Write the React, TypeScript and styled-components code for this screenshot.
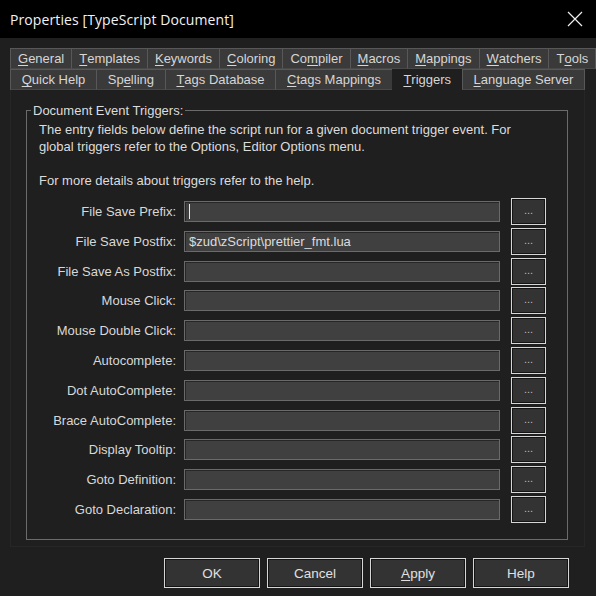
import { Fragment } from 'react';
import styled, { createGlobalStyle } from 'styled-components';

const GlobalStyle = createGlobalStyle`
  html, body {
    margin: 0;
    padding: 0;
    background: #1f1f1f;
  }
  * {
    box-sizing: border-box;
  }
`;

const Window = styled.div`
  width: 596px;
  height: 596px;
  background: #1f1f1f;
  color: #dcdcdc;
  font-family: 'Liberation Sans', Arial, sans-serif;
  font-size: 13px;
  display: flex;
  flex-direction: column;
  overflow: hidden;
`;

const TitleBar = styled.div`
  height: 38px;
  flex: none;
  background: #000;
  display: flex;
  align-items: center;
  justify-content: space-between;
  padding: 0 11px 0 10px;
`;

const Title = styled.div`
  color: #f2f2f2;
  font-family: 'Open Sans', 'Noto Sans', sans-serif;
  font-size: 14px;
  letter-spacing: 0.1px;
`;

const CloseButton = styled.div`
  width: 20px;
  height: 20px;
  display: flex;
  align-items: center;
  justify-content: center;
`;

const Body = styled.div`
  flex: 1;
  display: flex;
  flex-direction: column;
  padding: 10px 11px 0 10px;
`;

const TabStrip = styled.div`
  display: flex;
  flex-direction: column;
`;

const TabRow = styled.div`
  display: flex;
  height: 21px;
`;

const Tab = styled.div<{ $active?: boolean }>`
  flex: 1 1 auto;
  display: flex;
  align-items: center;
  justify-content: center;
  padding: 0 7px;
  margin-left: -1px;
  white-space: nowrap;
  color: #d6d6d6;
  background: ${({ $active }) => ($active ? '#1f1f1f' : '#3a3a3a')};
  border: 1px solid ${({ $active }) => ($active ? '#1f1f1f' : '#585858')};
  border-bottom-color: ${({ $active }) => ($active ? '#1f1f1f' : '#484848')};
  &:first-child {
    margin-left: 0;
  }
`;

const Key = styled.span`
  text-decoration: underline;
  text-underline-offset: 2px;
`;

const Page = styled.div`
  height: 457px;
  border: 1px solid #262626;
  border-top: none;
  padding: 13px 16px 0 15px;
`;

const Group = styled.fieldset`
  margin: 0;
  border: 1px solid #6b6b6b;
  padding: 3px 10px 16px 12px;
  min-width: 0;
`;

const Legend = styled.legend`
  margin-left: -8px;
  padding: 0 2px;
  line-height: 15px;
  color: #dcdcdc;
`;

const Intro = styled.p`
  margin: 0 0 9px;
  line-height: 17px;
  color: #dcdcdc;
  white-space: nowrap;
`;

const Fields = styled.div`
  display: grid;
  grid-template-columns: 137px 316px 35px;
  column-gap: 8px;
  row-gap: 2.8px;
  align-items: center;
`;

const Label = styled.label`
  justify-self: end;
  white-space: nowrap;
  color: #d8d8d8;
`;

const Field = styled.div`
  height: 21px;
  background: #404040;
  border: 1px solid #6a6a6a;
  box-shadow: inset 1px 1px 0 #262626;
  display: flex;
  align-items: center;
  padding: 0 4px;
  color: #dcdcdc;
  white-space: nowrap;
  overflow: hidden;
`;

const Caret = styled.span`
  width: 1px;
  height: 15px;
  background: #e8e8e8;
`;

const BrowseButton = styled.div`
  height: 27px;
  margin-left: 3px;
  width: 35px;
  background: #333;
  border: 1px solid #d6d6d6;
  box-shadow: inset 0 0 0 1px #141414;
  display: flex;
  align-items: center;
  justify-content: center;
  padding-bottom: 3px;
  color: #bdbdbd;
  font-size: 11px;
`;

const Footer = styled.div`
  display: flex;
  justify-content: flex-end;
  gap: 7px;
  margin-top: 11px;
  padding-right: 16px;
`;

const DialogButton = styled.div`
  width: 96px;
  height: 30px;
  background: #333;
  border: 1px solid #d6d6d6;
  box-shadow: inset 0 0 0 1px #141414;
  display: flex;
  align-items: center;
  justify-content: center;
  color: #e0e0e0;
  font-size: 13.5px;
`;

type TabDef = { label: string; key: number; active?: boolean };

const row1: TabDef[] = [
  { label: 'General', key: 0 },
  { label: 'Templates', key: 0 },
  { label: 'Keywords', key: 0 },
  { label: 'Coloring', key: 0 },
  { label: 'Compiler', key: 2 },
  { label: 'Macros', key: 0 },
  { label: 'Mappings', key: 0 },
  { label: 'Watchers', key: 0 },
  { label: 'Tools', key: 1 },
];

const row2: TabDef[] = [
  { label: 'Quick Help', key: 0 },
  { label: 'Spelling', key: 2 },
  { label: 'Tags Database', key: 0 },
  { label: 'Ctags Mappings', key: 0 },
  { label: 'Triggers', key: 0, active: true },
  { label: 'Language Server', key: 0 },
];

const triggers = [
  { label: 'File Save Prefix:', value: '', focused: true },
  { label: 'File Save Postfix:', value: '$zud\\zScript\\prettier_fmt.lua' },
  { label: 'File Save As Postfix:', value: '' },
  { label: 'Mouse Click:', value: '' },
  { label: 'Mouse Double Click:', value: '' },
  { label: 'Autocomplete:', value: '' },
  { label: 'Dot AutoComplete:', value: '' },
  { label: 'Brace AutoComplete:', value: '' },
  { label: 'Display Tooltip:', value: '' },
  { label: 'Goto Definition:', value: '' },
  { label: 'Goto Declaration:', value: '' },
];

function Mnemonic({ text, at }: { text: string; at: number }) {
  return (
    <>
      {text.slice(0, at)}
      <Key>{text[at]}</Key>
      {text.slice(at + 1)}
    </>
  );
}

function TabLine({ tabs }: { tabs: TabDef[] }) {
  return (
    <TabRow>
      {tabs.map((t) => (
        <Tab key={t.label} $active={t.active}>
          <Mnemonic text={t.label} at={t.key} />
        </Tab>
      ))}
    </TabRow>
  );
}

export default function App() {
  return (
    <>
      <GlobalStyle />
      <Window>
        <TitleBar>
          <Title>Properties [TypeScript Document]</Title>
          <CloseButton>
            <svg width="16" height="16" viewBox="0 0 16 16">
              <path d="M1 1 L15 15 M15 1 L1 15" stroke="#f0f0f0" strokeWidth="1.2" />
            </svg>
          </CloseButton>
        </TitleBar>
        <Body>
          <TabStrip>
            <TabLine tabs={row1} />
            <TabLine tabs={row2} />
          </TabStrip>
          <Page>
            <Group>
              <Legend>Document Event Triggers:</Legend>
              <Intro>
                The entry fields below define the script run for a given document trigger event. For
                <br />
                global triggers refer to the Options, Editor Options menu.
                <br />
                <br />
                For more details about triggers refer to the help.
              </Intro>
              <Fields>
                {triggers.map((t) => (
                  <Fragment key={t.label}>
                    <Label>{t.label}</Label>
                    <Field>{t.focused ? <Caret /> : t.value}</Field>
                    <BrowseButton>...</BrowseButton>
                  </Fragment>
                ))}
              </Fields>
            </Group>
          </Page>
          <Footer>
            <DialogButton>OK</DialogButton>
            <DialogButton>Cancel</DialogButton>
            <DialogButton>
              <Mnemonic text="Apply" at={0} />
            </DialogButton>
            <DialogButton>Help</DialogButton>
          </Footer>
        </Body>
      </Window>
    </>
  );
}
